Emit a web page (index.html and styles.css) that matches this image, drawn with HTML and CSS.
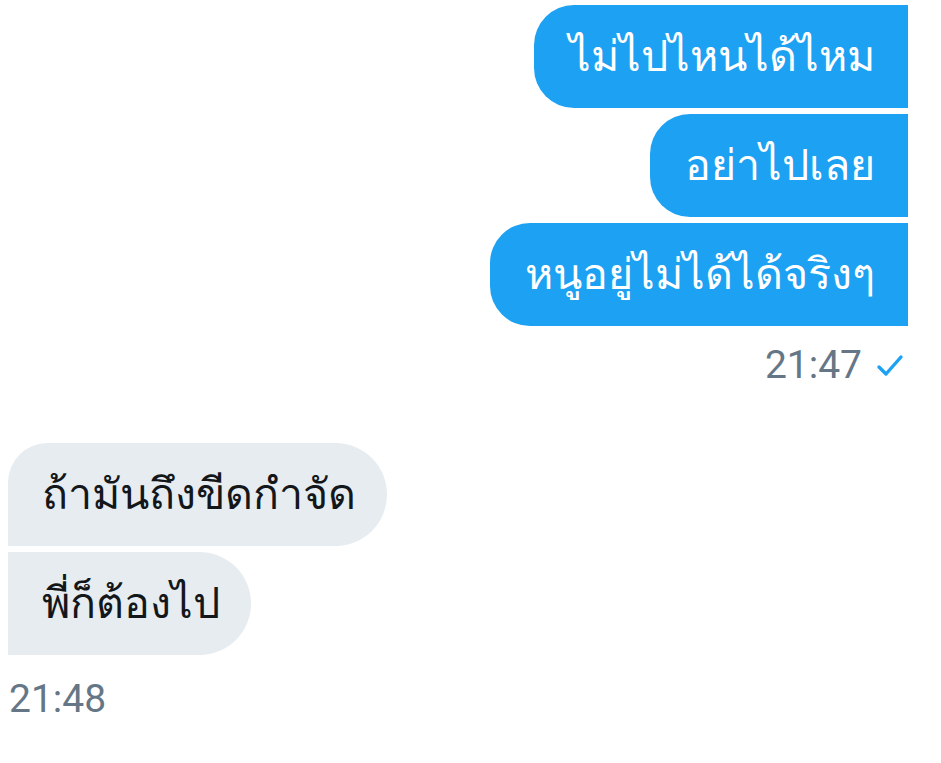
FILE: index.html
```html
<!DOCTYPE html>
<html lang="th">
<head>
<meta charset="utf-8">
<link rel="stylesheet" href="styles.css">
</head>
<body>
<div class="chat">
  <div class="group sent">
    <div class="bubble out first">ไม่ไปไหนได้ไหม</div>
    <div class="bubble out">อย่าไปเลย</div>
    <div class="bubble out last">หนูอยู่ไม่ได้ได้จริงๆ</div>
    <div class="meta out-meta">
      <span class="time">21:47</span>
      <svg class="check" width="28" height="24" viewBox="0 0 28 24"><path d="M3 14 L10 21 L25 4" fill="none" stroke="#1da1f2" stroke-width="3.4" stroke-linecap="round" stroke-linejoin="round"/></svg>
    </div>
  </div>
  <div class="group received">
    <div class="bubble in first">ถ้ามันถึงขีดกำจัด</div>
    <div class="bubble in last">พี่ก็ต้องไป</div>
    <div class="meta in-meta"><span class="time">21:48</span></div>
  </div>
</div>
</body>
</html>
```
FILE: styles.css
```css
html, body {
  margin: 0;
  padding: 0;
  background: #ffffff;
}
body {
  font-family: Roboto, "Noto Sans", "DejaVu Sans", sans-serif;
}
.chat {
  width: 941px;
  display: flex;
  flex-direction: column;
}
.group {
  display: flex;
  flex-direction: column;
  gap: 6px;
}
.sent {
  align-items: flex-end;
  padding: 5px 33px 0 0;
}
.received {
  align-items: flex-start;
  padding: 54px 0 0 8px;
}
.bubble {
  font-size: 43px;
  line-height: 55px;
  white-space: nowrap;
}
.out {
  background: #1da1f2;
  color: #ffffff;
  border-radius: 40px 0 0 40px;
  padding: 24px 33px 24px 35px;
}
.in {
  background: #e6ecf0;
  color: #14171a;
  border-radius: 0 52px 52px 0;
  padding: 24px 31px 24px 34px;
}
.in.first {
  border-top-left-radius: 40px;
}
.meta {
  display: flex;
  align-items: center;
  gap: 14px;
  color: #657786;
  font-size: 39px;
  line-height: 48px;
}
.out-meta {
  margin-top: 9px;
  padding-right: 4px;
}
.in-meta {
  margin-top: 14px;
  padding-left: 1px;
}
.check {
  display: block;
}
```
